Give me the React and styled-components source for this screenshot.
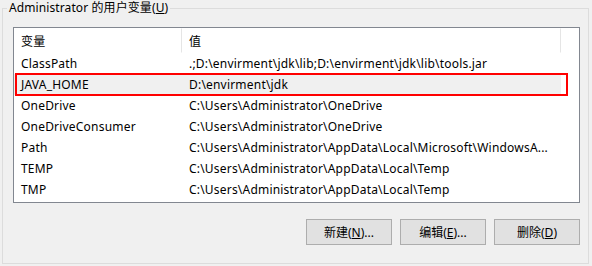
import React from "react";
import styled, { createGlobalStyle } from "styled-components";

const GlobalStyle = createGlobalStyle`
  html, body {
    margin: 0;
    padding: 0;
    background: #f0f0f0;
  }
  body {
    font-family: "Noto Sans", "Noto Sans CJK SC", sans-serif;
    font-size: 12px;
    color: #000;
  }
`;

const variables = [
  { name: "ClassPath", value: ".;D:\\envirment\\jdk\\lib;D:\\envirment\\jdk\\lib\\tools.jar" },
  { name: "JAVA_HOME", value: "D:\\envirment\\jdk", marked: true },
  { name: "OneDrive", value: "C:\\Users\\Administrator\\OneDrive" },
  { name: "OneDriveConsumer", value: "C:\\Users\\Administrator\\OneDrive" },
  { name: "Path", value: "C:\\Users\\Administrator\\AppData\\Local\\Microsoft\\WindowsA..." },
  { name: "TEMP", value: "C:\\Users\\Administrator\\AppData\\Local\\Temp" },
  { name: "TMP", value: "C:\\Users\\Administrator\\AppData\\Local\\Temp" },
];

const Page = styled.div`
  width: 592px;
  height: 266px;
  padding-left: 2px;
  box-sizing: border-box;
`;

const GroupBox = styled.fieldset`
  margin: 0;
  width: 587px;
  height: 264px;
  box-sizing: border-box;
  border: 1px solid #dcdcdc;
  padding: 0 8px 0 10px;
  display: flex;
  flex-direction: column;
`;

const Title = styled.legend`
  margin-left: -6px;
  padding: 0 2px;
  height: 16px;
  line-height: 16px;
  font-family: "Noto Sans", "Noto Sans CJK SC", sans-serif;
  font-size: 12px;
  letter-spacing: 0.1px;
  white-space: nowrap;
`;

const Key = styled.span`
  text-decoration: underline;
  text-underline-offset: 1px;
`;

const ListBox = styled.div`
  margin-top: 11px;
  width: 567px;
  height: 176px;
  box-sizing: border-box;
  border: 1px solid #828790;
  background: #fff;
  overflow: hidden;
`;

const Row = styled.div`
  position: relative;
  display: grid;
  grid-template-columns: 168px 379px 1fr;
  height: ${(p) => (p.$header ? 25 : 21)}px;
  align-items: center;
  white-space: nowrap;
  letter-spacing: 0.2px;
`;

const Cell = styled.div`
  height: 100%;
  display: flex;
  align-items: center;
  padding-left: 7px;
  overflow: hidden;
  background: ${(p) => (p.$selected ? "#f0f0f0" : "transparent")};
  border-right: ${(p) => (p.$divider ? "1px solid #e5e5e5" : "none")};
  border-top: ${(p) => (p.$divider ? "1px solid #fff" : "none")};
  border-bottom: ${(p) => (p.$divider ? "1px solid #fff" : "none")};
  box-sizing: border-box;
`;

const Marker = styled.div`
  position: absolute;
  left: 1px;
  right: 11px;
  top: -1px;
  bottom: -1px;
  border: 2px solid #f00;
  pointer-events: none;
`;

const ButtonRow = styled.div`
  display: flex;
  justify-content: flex-end;
  gap: 8px;
  margin-top: 16px;
  width: 567px;
`;

const Button = styled.button`
  width: 86px;
  height: 26px;
  box-sizing: border-box;
  border: 1px solid #adadad;
  background: #e1e1e1;
  padding: 0;
  font-family: "Noto Sans", "Noto Sans CJK SC", sans-serif;
  font-size: 12px;
  color: #000;
`;

export default function App() {
  return (
    <Page>
      <GlobalStyle />
      <GroupBox>
        <Title>
          Administrator 的用户变量(<Key>U</Key>)
        </Title>
        <ListBox>
          <Row $header>
            <Cell $divider>变量</Cell>
            <Cell $divider>值</Cell>
            <Cell />
          </Row>
          {variables.map((v) => (
            <Row key={v.name}>
              <Cell $selected={v.marked}>{v.name}</Cell>
              <Cell $selected={v.marked}>{v.value}</Cell>
              <Cell />
              {v.marked && <Marker />}
            </Row>
          ))}
        </ListBox>
        <ButtonRow>
          <Button>
            新建(<Key>N</Key>)...
          </Button>
          <Button>
            编辑(<Key>E</Key>)...
          </Button>
          <Button>
            删除(<Key>D</Key>)
          </Button>
        </ButtonRow>
      </GroupBox>
    </Page>
  );
}
